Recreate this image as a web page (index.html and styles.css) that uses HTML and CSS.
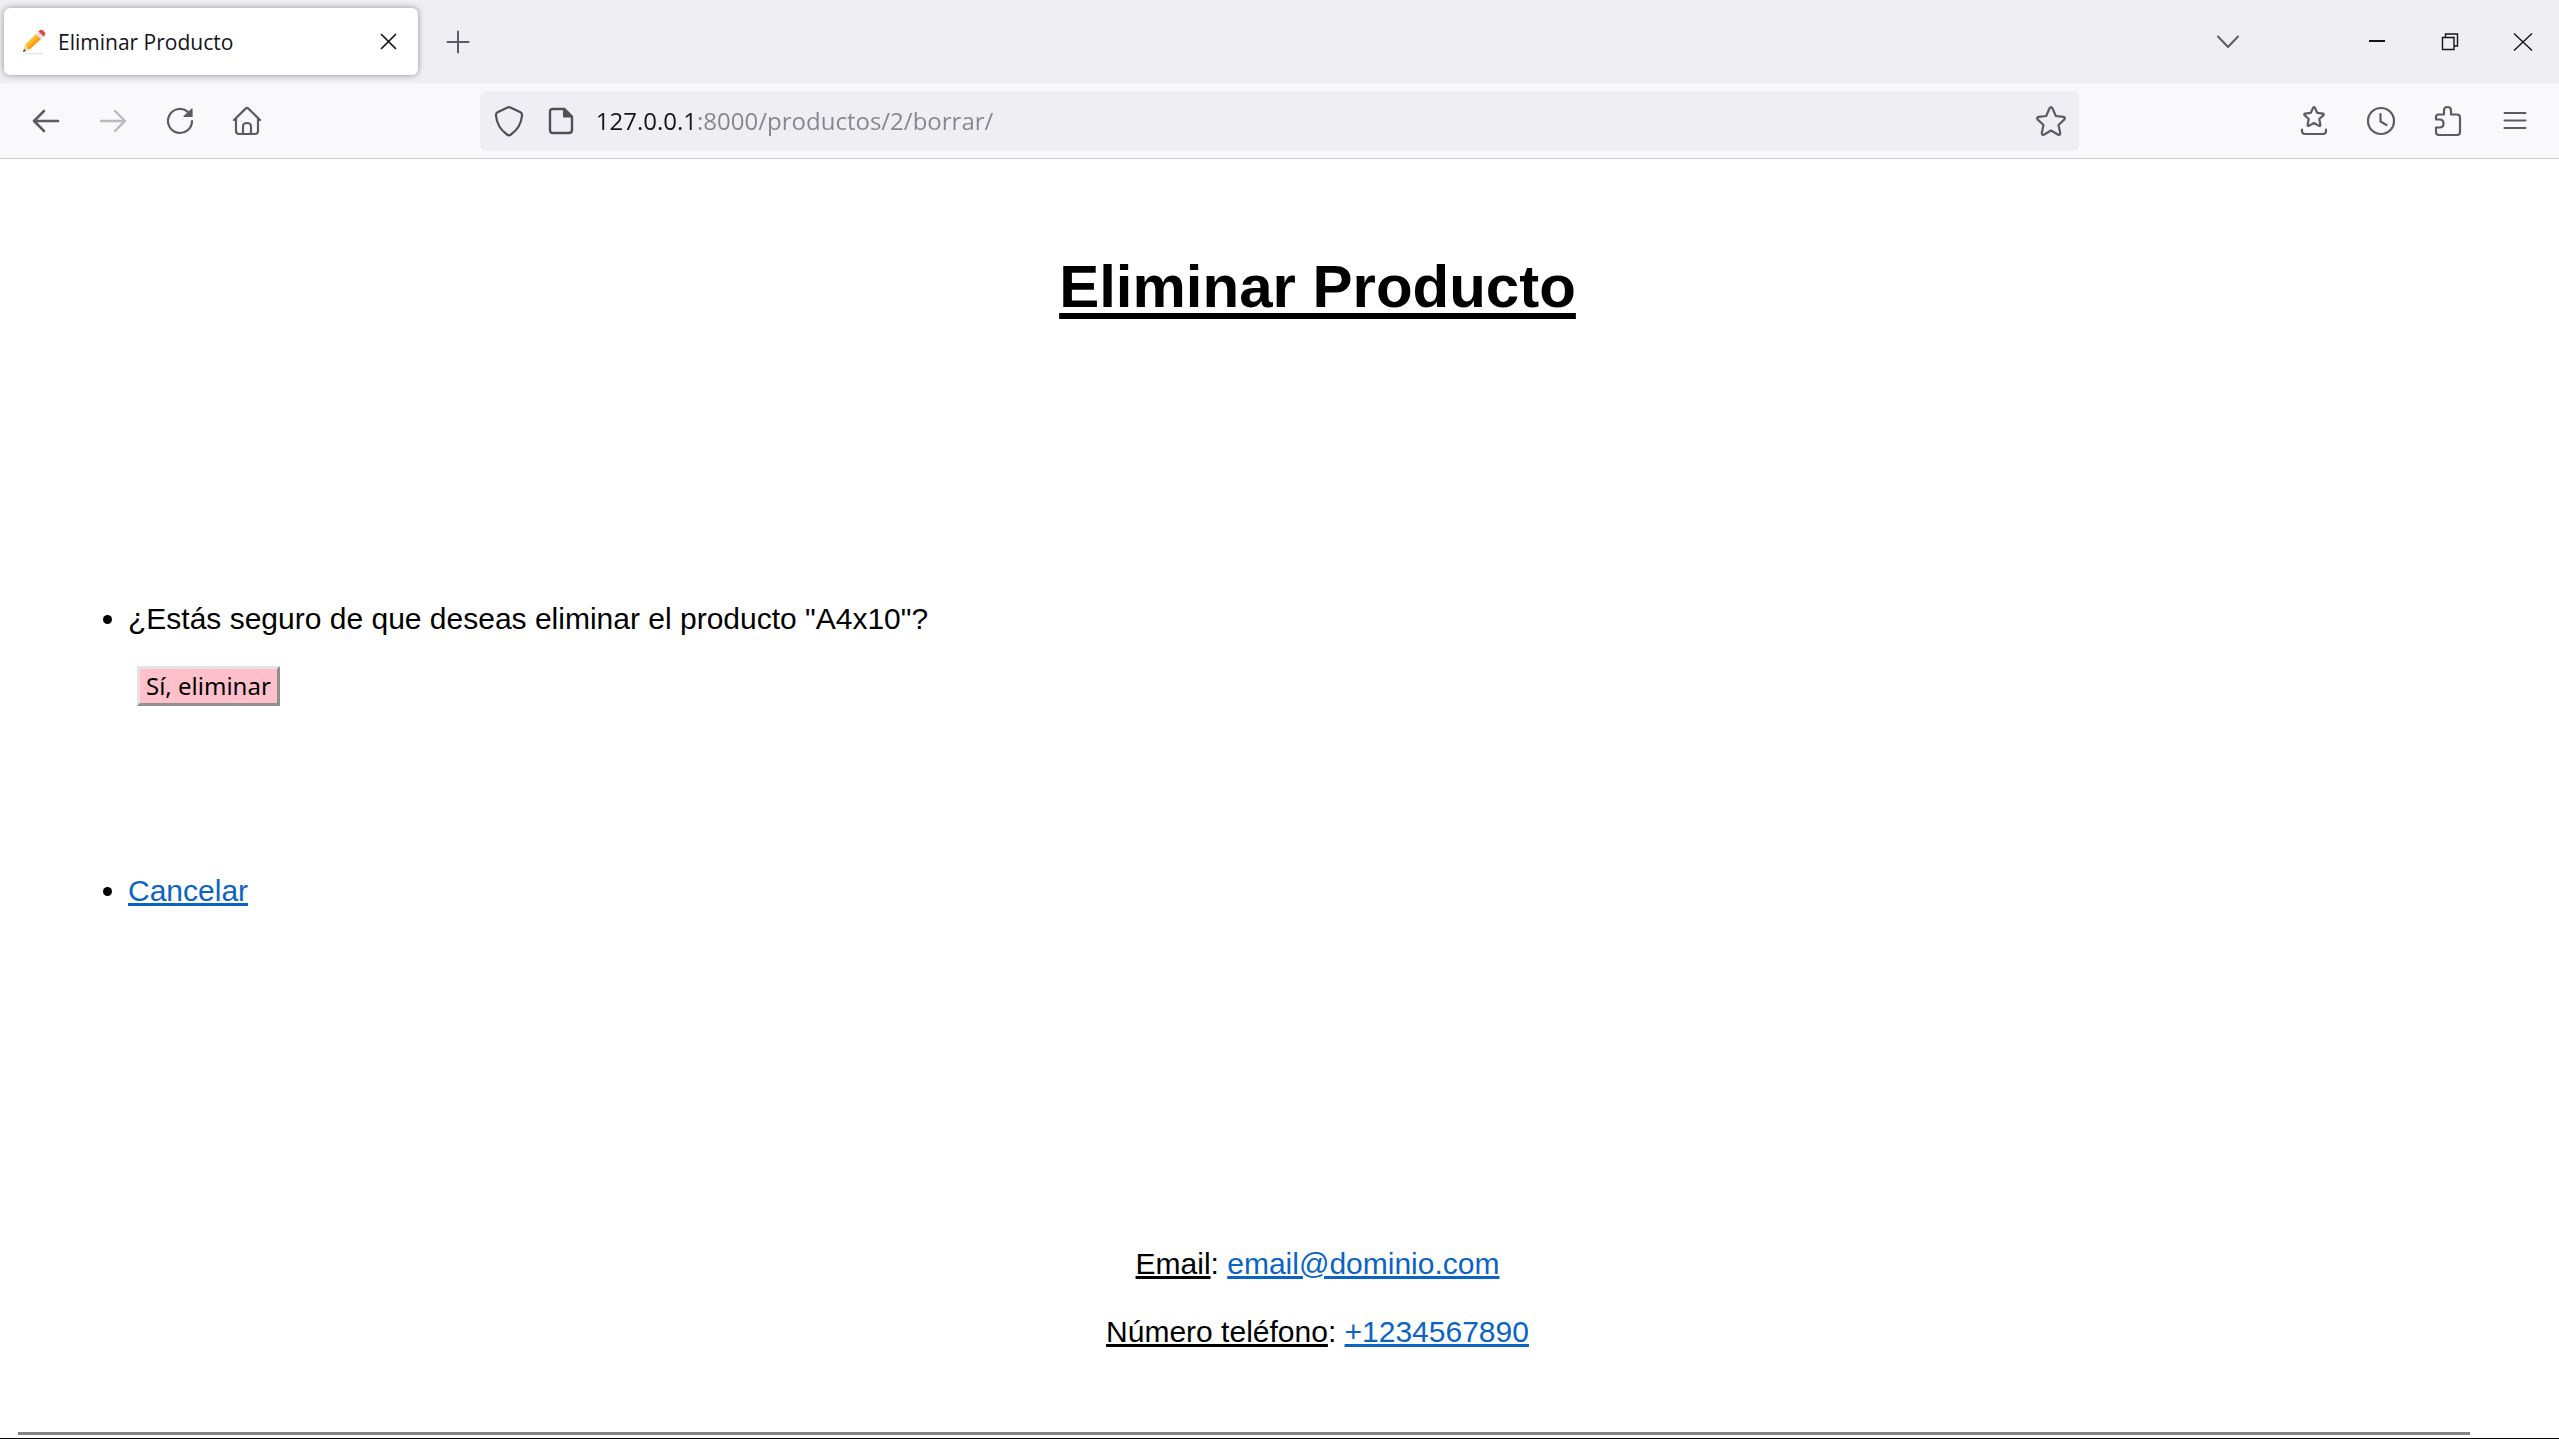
FILE: index.html
```html
<!DOCTYPE html>
<html lang="es">
<head>
<meta charset="utf-8">
<title>Eliminar Producto</title>
<link rel="stylesheet" href="styles.css">
</head>
<body>
<header class="browser">
  <div class="tabstrip">
    <div class="tab">
      <svg class="favicon" width="24" height="26" viewBox="0 0 24 26" aria-hidden="true">
        <path d="M3 24.500h18" stroke="#e4e4e4" stroke-width="1.500"/>
        <path d="M1 23l2-7 4.500 4.500z" fill="#f3cf9c"/>
        <path d="M1 23l1-3 2 2z" fill="#444"/>
        <path d="M3 16L14 5l5 5L7.500 20.500z" fill="#fdbb2d"/>
        <path d="M5.500 18.500L16.500 7.500l2.500 2.500L7.500 20.500z" fill="#f59f1c"/>
        <path d="M14 5l2.500-2.500 5 5L19 10z" fill="#dce3e8"/>
        <path d="M16.500 2.500l1-1c1-1 2.500-1 3.500 0l1.500 1.500c1 1 1 2.500 0 3.500l-1 1z" fill="#e6453c"/>
      </svg>
      <span class="tab-title">Eliminar Producto</span>
      <button class="tab-close" aria-label="Cerrar pestaña">
        <svg width="17" height="17" viewBox="0 0 17 17"><path d="M1.500 1.500l14 14M15.500 1.500l-14 14" stroke="#15141a" stroke-width="1.700" stroke-linecap="round"/></svg>
      </button>
    </div>
    <button class="icon-button new-tab" aria-label="Nueva pestaña">
      <svg width="24" height="24" viewBox="0 0 24 24"><path d="M12 1.500v21M1.500 12h21" stroke="#5b5b66" stroke-width="2" stroke-linecap="round"/></svg>
    </button>
    <button class="icon-button all-tabs" aria-label="Listar pestañas">
      <svg width="26" height="16" viewBox="0 0 26 16" fill="none"><path d="M3 2.500l10 10.500 10-10.500" stroke="#5b5b66" stroke-width="2" stroke-linecap="round" stroke-linejoin="round"/></svg>
    </button>
    <div class="window-controls">
      <button class="window-button" aria-label="Minimizar"><svg width="18" height="18" viewBox="0 0 18 18"><path d="M1 8h16" stroke="#15141a" stroke-width="2"/></svg></button>
      <button class="window-button" aria-label="Restaurar"><svg width="18" height="18" viewBox="0 0 18 18" fill="none" stroke="#15141a" stroke-width="1.400"><path d="M1.500 4.500h11.500v12H1.500zM4.500 4.500V1h12v12H13"/></svg></button>
      <button class="window-button" aria-label="Cerrar"><svg width="20" height="20" viewBox="0 0 20 20"><path d="M1 1.500l18 17M19 1.500l-18 17" stroke="#15141a" stroke-width="1.400"/></svg></button>
    </div>
  </div>
  <div class="toolbar">
    <nav class="nav-buttons" aria-label="Navegación">
      <button class="icon-button" aria-label="Atrás"><svg width="28" height="28" viewBox="0 0 28 28" fill="none" stroke="#5b5b66" stroke-width="2.600" stroke-linecap="round" stroke-linejoin="round"><path d="M26 14H2.500M12 4L2 14l10 10"/></svg></button>
      <button class="icon-button" aria-label="Adelante" disabled><svg width="28" height="28" viewBox="0 0 28 28" fill="none" stroke="#b9b9c0" stroke-width="2.400" stroke-linecap="round" stroke-linejoin="round"><path d="M2 14h23.500M16 4l10 10-10 10"/></svg></button>
      <button class="icon-button" aria-label="Recargar"><svg width="28" height="28" viewBox="0 0 28 28" fill="none" stroke="#5b5b66" stroke-width="2.200" stroke-linecap="round" stroke-linejoin="round"><path d="M26 14A12 12 0 1 1 21.500 4.600"/><path d="M26 2v7.500h-8z" fill="#5b5b66" stroke-width="1.200"/></svg></button>
      <button class="icon-button" aria-label="Inicio"><svg width="30" height="30" viewBox="0 0 30 30" fill="none" stroke="#5b5b66" stroke-width="2.200" stroke-linecap="round" stroke-linejoin="round"><path d="M2 14L13.600 2.600q1.400-1.300 2.800 0L28 14M4 12.500V25q0 3 3 3h16q3 0 3-3V12.500M11 28V20.500q0-3.500 4-3.500t4 3.500V28"/></svg></button>
    </nav>
    <div class="urlbar">
      <svg class="shield" width="30" height="32" viewBox="0 0 30 32" fill="none" stroke="#4f4f58" stroke-width="2.200" stroke-linejoin="round"><path d="M13.600 2.400Q15 1.700 16.400 2.400L26.500 7.300Q28.300 8.200 28 10.500C27.400 18 24 24.500 17 29.500Q15 31 13 29.500C6 24.500 2.600 18 2 10.500Q1.700 8.200 3.500 7.300z"/></svg>
      <svg width="26" height="28" viewBox="0 0 26 28" fill="none" stroke="#4f4f58" stroke-width="2.400" stroke-linejoin="round"><path d="M5 2h11.500L24 9.500V23q0 3-3 3H5q-3 0-3-3V5q0-3 3-3z"/><path d="M15.500 2v8H24z" fill="#4f4f58" stroke-width="1"/></svg>
      <input class="url" type="text" aria-label="Dirección" value="127.0.0.1:8000/productos/2/borrar/">
      <button class="icon-button" aria-label="Añadir a marcadores"><svg width="32" height="32" viewBox="0 0 32 32" fill="none" stroke="#5b5b66" stroke-width="2.200" stroke-linejoin="round"><path d="M14.500 3.300q1.500-2.300 3 0L20.800 11l7.700.9q2.300.6.900 2.500L23.500 20l1.700 8q.1 2.400-2 1.700L16 25.500l-7.200 4.200q-2.100.7-2-1.700l1.700-8-5.900-5.600q-1.400-1.900.9-2.500l7.700-.9z"/></svg></button>
    </div>
    <div class="tool-buttons">
      <button class="icon-button" aria-label="Marcadores"><svg width="28" height="32" viewBox="0 0 28 32" fill="none" stroke="#5b5b66" stroke-width="2.200" stroke-linecap="round" stroke-linejoin="round"><path d="M13.200 2.600q.8-1.200 1.600 0l2.400 5.200 5.800.8q1.200.4.500 1.500l-4.200 3.900 1.100 6q0 1.200-1.200.9L14 18l-5.200 2.900q-1.200.3-1.200-.9l1.100-6-4.200-3.900Q3.800 9 5 8.600l5.800-.8zM2 24.500V26q0 3 3 3h18q3 0 3-3v-1.500"/></svg></button>
      <button class="icon-button" aria-label="Historial"><svg width="30" height="30" viewBox="0 0 30 30" fill="none" stroke="#5b5b66" stroke-width="2.200" stroke-linecap="round" stroke-linejoin="round"><circle cx="15" cy="15" r="13"/><path d="M14.500 8v7.500l6 3.500"/></svg></button>
      <button class="icon-button" aria-label="Extensiones"><svg width="28" height="32" viewBox="0 0 28 32" fill="none" stroke="#5b5b66" stroke-width="2.200" stroke-linejoin="round"><path d="M2 13V12q0-2.500 2.500-2.500H10V5.500Q10 2 13.500 2T17 5.500v4h6q3 0 3 3V27q0 3-3 3H5q-3 0-3-3v-4.500h3.500q4 0 4-4t-4-4H2z"/></svg></button>
      <button class="icon-button" aria-label="Menú"><svg width="24" height="20" viewBox="0 0 24 20" stroke="#5b5b66" stroke-width="2" stroke-linecap="round"><path d="M1.500 2h21M1.500 9.500h21M1.500 17h21"/></svg></button>
    </div>
  </div>
</header>
<main class="page">
  <h1 class="title">Eliminar Producto</h1>
  <ul class="actions">
    <li>
      <form class="delete-form">
        <p class="question">¿Estás seguro de que deseas eliminar el producto "A4x10"?</p>
        <button class="delete-button" type="submit">Sí, eliminar</button>
      </form>
    </li>
    <li><a href="#">Cancelar</a></li>
  </ul>
  <footer class="contact">
    <p><u>Email</u>: <a href="mailto:email@dominio.com">email@dominio.com</a></p>
    <p><u>Número teléfono</u>: <a href="tel:+1234567890">+1234567890</a></p>
  </footer>
</main>
<hr class="rule">
</body>
</html>
```
FILE: styles.css
```css
* { box-sizing: border-box; }

body {
  margin: 0;
  min-height: 100vh;
  display: flex;
  flex-direction: column;
  background: #fff;
  border-bottom: 1px solid #000;
  color: #000;
  font-family: "Liberation Sans", Arial, sans-serif;
  font-size: 30px;
  line-height: 34px;
}

/* Browser chrome */
.browser {
  border-bottom: 1px solid #cccccf;
  font-family: "Open Sans", "Noto Sans", sans-serif;
}

.browser button {
  display: flex;
  align-items: center;
  justify-content: center;
  padding: 0;
  border: 0;
  background: none;
}

.browser svg { display: block; flex: none; }

.tabstrip {
  display: flex;
  align-items: center;
  height: 83px;
  padding-left: 4px;
  background: #efeef3;
}

.tab {
  display: flex;
  align-items: center;
  width: 414px;
  height: 67px;
  padding: 0 14px 0 18px;
  border-radius: 6px;
  background: #fff;
  box-shadow: 0 0 6px rgba(0, 0, 0, 0.4);
}

.tab-title {
  flex: 1;
  padding-left: 12px;
  color: #15141a;
  font-size: 21px;
}

.browser .tab-close { width: 32px; height: 32px; }

.browser .icon-button { flex: none; width: 52px; height: 52px; }

.new-tab { margin-left: 14px; }

.browser .all-tabs { margin-left: auto; margin-right: 86px; }

.window-controls { display: flex; }

.browser .window-button { width: 73px; height: 83px; }

.toolbar {
  display: grid;
  grid-template-columns: 3fr 10fr 3fr;
  align-items: center;
  height: 75px;
  background: #f9f9fb;
}

.nav-buttons,
.tool-buttons {
  display: flex;
  gap: 15px;
  padding: 0 18px 0 20px;
}

.tool-buttons { justify-content: flex-end; }

.urlbar {
  display: flex;
  align-items: center;
  height: 60px;
  padding: 0 2px 0 14px;
  border-radius: 6px;
  background: #efeef3;
}

.shield { margin-right: 24px; }

.url {
  flex: 1;
  min-width: 0;
  height: 40px;
  margin-left: 22px;
  padding: 0;
  border: 0;
  outline: 0;
  background: linear-gradient(to right, #15141a 100px, #85858b 100px);
  background-clip: text;
  color: transparent;
  font-family: inherit;
  font-size: 24px;
}

/* Page content */
.page {
  flex: 1;
  padding: 94px 0 0 76px;
}

.title {
  margin: 0;
  font-size: 60px;
  line-height: 68px;
  text-align: center;
  text-decoration: underline 6px;
  text-underline-offset: 6px;
}

.actions {
  display: grid;
  gap: 168px;
  margin: 281px 0 0;
  padding-left: 52px;
}

.question { margin: 0 0 30px; }

.delete-button {
  display: block;
  height: 40px;
  margin-left: 9px;
  padding: 0 6px;
  border: 3px outset #e3e3e3;
  background: pink;
  color: #000;
  font-family: "Noto Sans", sans-serif;
  font-size: 24px;
  line-height: 34px;
}

a { color: #0b63c4; }

.contact {
  display: grid;
  gap: 34px;
  margin-top: 339px;
  text-align: center;
}

.contact p { margin: 0; }

.rule {
  width: auto;
  height: 3px;
  margin: 0 89px 3px 18px;
  border: 0;
  background: #858585;
}
```
